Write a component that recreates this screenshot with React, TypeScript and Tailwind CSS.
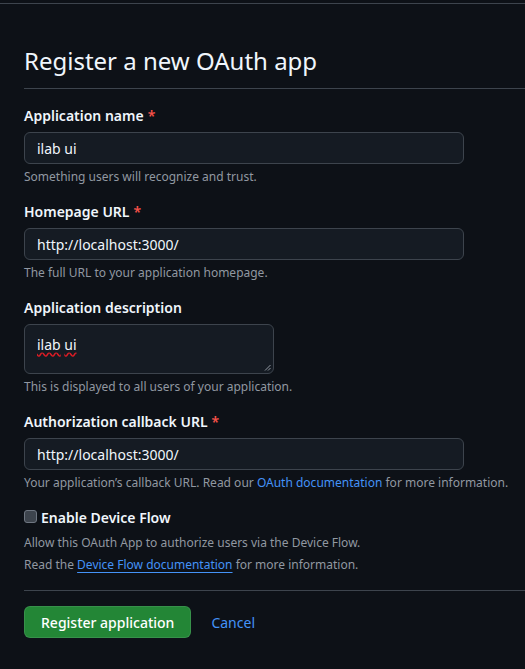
import React from "react";

const font = { fontFamily: '"Noto Sans", "Open Sans", sans-serif' };

function Label({ children, required }: { children: React.ReactNode; required?: boolean }) {
  return (
    <div className="text-[14px] leading-[20px] font-semibold text-[#f0f6fc] mb-[6px]">
      {children}
      {required && <span className="text-[#f85149] ml-[4px]">*</span>}
    </div>
  );
}

function Input({ value }: { value: string }) {
  return (
    <div className="w-[440px] h-[32px] rounded-[6px] border border-[#3d444d] bg-[#151b23] px-[12px] flex items-center text-[14px] text-[#f0f6fc]">
      {value}
    </div>
  );
}

function Note({ children }: { children: React.ReactNode }) {
  return <p className="mt-[4px] text-[12px] leading-[18px] text-[#9198a1]">{children}</p>;
}

export default function App() {
  return (
    <div className="min-h-[669px] w-[525px] bg-[#0d1117] overflow-hidden" style={font}>
      <div className="h-[3px]" />
      <div className="h-px bg-[#3d444d]" />
      <div className="pl-[24px]">
        <div className="pt-[39px] pb-[9px] border-b border-[#3d444d]">
          <h1 className="text-[24px] leading-[36px] font-normal text-[#f0f6fc]">Register a new OAuth app</h1>
        </div>
        <div className="pt-[17px]">
          <Label required>Application name</Label>
          <Input value="ilab ui" />
          <Note>Something users will recognize and trust.</Note>

          <div className="mt-[16px]">
            <Label required>Homepage URL</Label>
            <Input value="http://localhost:3000/" />
            <Note>The full URL to your application homepage.</Note>
          </div>

          <div className="mt-[16px]">
            <Label>Application description</Label>
            <div className="relative w-[250px] h-[50px] rounded-[6px] border border-[#3d444d] bg-[#151b23] px-[12px] pt-[10px] text-[14px] leading-[20px] text-[#f0f6fc]">
              <span className="underline decoration-wavy decoration-[#e01b24] underline-offset-[2px]">ilab</span>{" "}
              <span className="underline decoration-wavy decoration-[#e01b24] underline-offset-[2px]">ui</span>
              <svg className="absolute right-[2px] bottom-[2px]" width="7" height="7" viewBox="0 0 7 7">
                <line x1="1" y1="6.5" x2="6.5" y2="1" stroke="#9198a1" strokeWidth="1" />
                <line x1="4" y1="6.5" x2="6.5" y2="4" stroke="#9198a1" strokeWidth="1" />
              </svg>
            </div>
            <Note>This is displayed to all users of your application.</Note>
          </div>

          <div className="mt-[16px]">
            <Label required>Authorization callback URL</Label>
            <Input value="http://localhost:3000/" />
            <Note>
              Your application’s callback URL. Read our{" "}
              <span className="text-[#4493f8]">OAuth documentation</span> for more information.
            </Note>
          </div>

          <div className="mt-[15px]">
            <div className="flex items-center h-[20px]">
              <span className="w-[13px] h-[13px] rounded-[3px] border border-[#6e7681] bg-[#3d444d] mr-[4px] mb-[2px]" />
              <span className="text-[14px] font-semibold text-[#f0f6fc]">Enable Device Flow</span>
            </div>
            <p className="mt-[5px] text-[12px] leading-[22px] text-[#9198a1]">
              Allow this OAuth App to authorize users via the Device Flow.
            </p>
            <p className="text-[12px] leading-[22px] text-[#9198a1]">
              Read the{" "}
              <span className="text-[#4493f8] underline underline-offset-[3px]">Device Flow documentation</span> for more information.
            </p>
          </div>

          <div className="mt-[14px] border-t border-[#3d444d] pt-[15px] flex items-center">
            <button className="h-[32px] px-[16px] rounded-[6px] bg-[#238636] border border-[rgba(240,246,252,0.1)] text-[14px] font-medium text-white">
              Register application
            </button>
            <span className="ml-[20px] text-[14px] text-[#4493f8]">Cancel</span>
          </div>
        </div>
      </div>
    </div>
  );
}
